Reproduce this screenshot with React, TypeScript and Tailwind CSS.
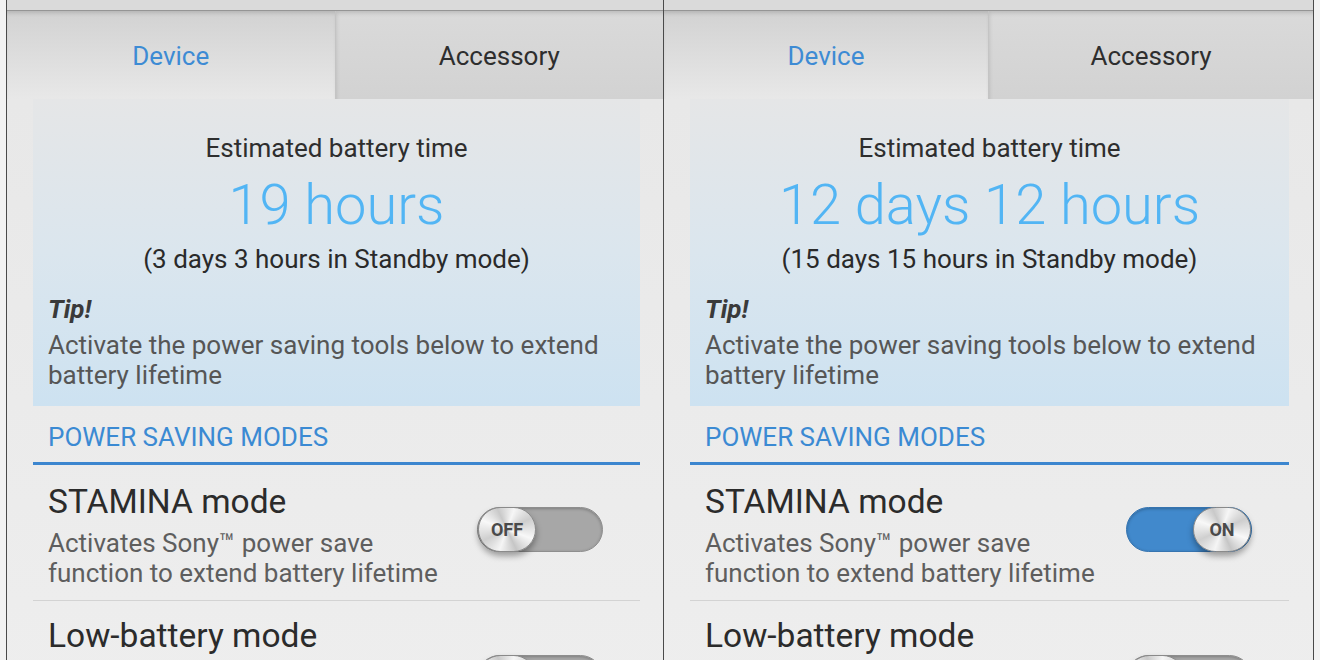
import React from 'react';

function Toggle({ on, label = true, className }: { on: boolean; label?: boolean; className?: string }) {
  return (
    <div
      className={`flex h-[45px] w-[126px] shrink-0 items-center rounded-full border ${
        on ? 'justify-end border-[#3674b0] bg-[#4189cc]' : 'justify-start border-[#8e8e8e] bg-[#a7a7a7]'
      } shadow-[inset_0_1px_3px_rgba(0,0,0,0.25)] ${className ?? ''}`}
    >
      <div className="flex h-[45px] w-[58px] items-center justify-center rounded-full border border-[#8a8a8a] bg-[conic-gradient(from_20deg,#f6f6f6,#cdcdcd,#f8f8f8,#c6c6c6,#f5f5f5,#cfcfcf,#f8f8f8,#c9c9c9,#f6f6f6)] text-[18px] font-bold text-[#4a4a4a] shadow-[0_4px_6px_rgba(0,0,0,0.35)]">
        {label ? (on ? 'ON' : 'OFF') : null}
      </div>
    </div>
  );
}

function Panel({
  main,
  standby,
  on,
  className,
  pr,
}: {
  main: string;
  standby: string;
  on: boolean;
  className: string;
  pr: string;
}) {
  return (
    <div className={`flex h-[660px] flex-col overflow-hidden ${className}`}>
      <div className="h-[11px] shrink-0 border-b border-[#959595] bg-[#dadada]" />
      <div className="flex h-[88px] shrink-0">
        <div className="flex flex-1 items-center justify-center bg-gradient-to-b from-[#d2d2d2] to-[#e8e8e8] pt-[3px] text-[26px] text-[#3d8bd4] shadow-[inset_0_4px_4px_-2px_rgba(0,0,0,0.15)]">
          Device
        </div>
        <div className="flex flex-1 items-center justify-center border-l border-[#c4c4c4] bg-gradient-to-b from-[#dadada] to-[#d2d2d2] pt-[3px] text-[26px] text-[#2e2e2e] shadow-[inset_2px_4px_4px_-2px_rgba(0,0,0,0.15)]">
          Accessory
        </div>
      </div>
      <div className={`flex-1 bg-gradient-to-b from-[#e8e8e8] to-[#eeeeee] pl-[26px] ${pr}`}>
        {/* battery estimate box */}
        <div className="bg-gradient-to-b from-[#e5e6e7] via-[#dbe6ee] to-[#cde2f1] px-[15px] pt-[34px] pb-[16px]">
          <div className="h-[30px] text-center text-[26px] leading-[30px] text-[#2e2e2e]">Estimated battery time</div>
          <div className="mt-[10px] h-[64px] text-center text-[56px] font-light leading-[64px] text-[#52b5f4]">{main}</div>
          <div className="mt-[7px] h-[30px] text-center text-[26px] leading-[30px] text-[#2a2a2a]">{standby}</div>
          <div className="mt-[20px] h-[30px] text-[26px] font-bold italic leading-[30px] text-[#3a3a3a]">Tip!</div>
          <div className="mt-[6px] text-[26px] leading-[30px] text-[#565656]">
            Activate the power saving tools below to extend battery lifetime
          </div>
        </div>
        <div className="mt-[16px] h-[30px] pl-[15px] text-[26px] leading-[30px] text-[#3b8ad3]">POWER SAVING MODES</div>
        <div className="mt-[10px] h-[3px] bg-[#3c86cf]" />
        <div className="flex justify-between pr-[37px] pl-[15px]">
          <div className="pb-[12px]">
            <div className="mt-[18px] h-[38px] text-[33.5px] leading-[38px] text-[#2b2b2b]">STAMINA mode</div>
            <div className="mt-[7px] text-[26px] leading-[30px] text-[#5e5e5e]">
              Activates Sony™ power save
              <br />
              function to extend battery lifetime
            </div>
          </div>
          <Toggle on={on} className="mt-[42px]" />
        </div>
        <div className="h-px bg-[#d3d3d3]" />
        <div className="flex justify-between pr-[37px] pl-[15px]">
          <div className="mt-[16px] h-[38px] text-[33.5px] leading-[38px] text-[#2b2b2b]">Low-battery mode</div>
          <Toggle on={false} label={false} className="mt-[54px]" />
        </div>
      </div>
    </div>
  );
}

export default function App() {
  return (
    <div className="flex h-[660px] w-[1320px] overflow-hidden bg-[#f2f2f2] pl-[6px] font-[Roboto,sans-serif]">
      <Panel
        main="19 hours"
        standby="(3 days 3 hours in Standby mode)"
        on={false}
        className="w-[658px] shrink-0 border-x border-[#4a4a4a]"
        pr="pr-[23px]"
      />
      <Panel
        main="12 days 12 hours"
        standby="(15 days 15 hours in Standby mode)"
        on={true}
        className="w-[650px] shrink-0 border-r border-[#4a4a4a]"
        pr="pr-[24px]"
      />
    </div>
  );
}
